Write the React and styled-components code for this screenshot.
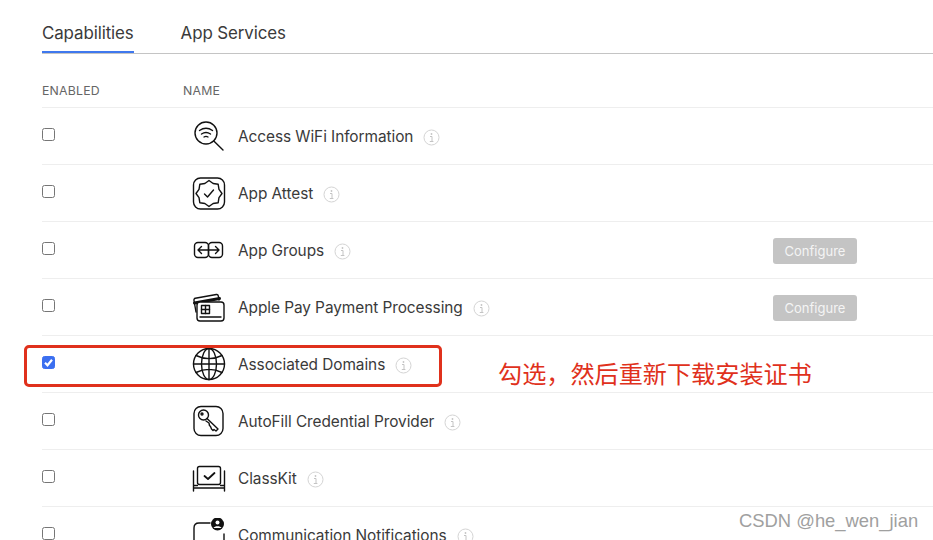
import React from "react";
import styled, { createGlobalStyle } from "styled-components";

const Global = createGlobalStyle`
  html, body { margin: 0; padding: 0; background: #fff; overflow: hidden; height: 540px; }
  body { font-family: Inter, "Liberation Sans", sans-serif; color: #333; }
`;
const Page = styled.div`
  position: relative; width: 933px; height: 540px; overflow: hidden;
  padding: 19px 0 0 42px; box-sizing: border-box;
`;
const Tabs = styled.div`
  display: flex; gap: 47px; height: 34px; border-bottom: 1px solid #c4c4c4;
`;
const Tab = styled.div`
  height: 34px; box-sizing: border-box; padding-top: 2px;
  font-size: 16.9px; line-height: 24px; color: #3a3a3a; letter-spacing: -0.1px;
  border-bottom: ${p => (p.$active ? "2px solid #3f78ee" : "none")};
`;
const Head = styled.div`
  display: grid; grid-template-columns: 141px 1fr; height: 54px; box-sizing: border-box;
  padding-top: 30px; border-bottom: 1px solid #eee;
  font-size: 12.3px; line-height: 14px; color: #666; letter-spacing: 0.2px;
`;
const Row = styled.div`
  display: grid; grid-template-columns: 141px 55px auto 1fr; align-items: center;
  height: 57px; box-sizing: border-box; border-bottom: 1px solid #eee;
`;
const Check = styled.span`
  width: 13px; height: 13px; box-sizing: border-box; border-radius: 2.5px; margin-top: -4px;
  border: 1px solid ${p => (p.$on ? "#3b6ff0" : "#767676")};
  background: ${p => (p.$on ? "#3b6ff0" : "#fff")};
  display: flex; align-items: center; justify-content: center;
`;
const IconBox = styled.span`
  display: flex; width: 34px; height: 34px; margin-left: 9px; margin-top: -1px;
  align-items: center; justify-content: center;
`;
const Name = styled.div`
  display: flex; align-items: center; gap: 10px; font-size: 15.4px; line-height: 20px; color: #3a3a3a;
  letter-spacing: -0.06px; margin-top: 1px;
`;
const InfoIcon = styled.svg`
  width: 17px; height: 17px; margin-top: 2px;
`;
const Configure = styled.div`
  justify-self: end; margin-right: 76px; margin-top: 2px; width: 84px; height: 26px; border-radius: 3px;
  background: #c4c4c4; color: #f4f4f4; font-size: 13px; line-height: 26px; text-align: center;
`;
const Highlight = styled.div`
  position: absolute; left: 24px; top: 345px; width: 418px; height: 42px; box-sizing: border-box;
  border: 3px solid #e0311c; border-radius: 5px;
`;
const Note = styled.div`
  position: absolute; left: 498px; top: 359px; font-size: 24.15px; line-height: 28px; white-space: nowrap;
  color: #e0311c; font-family: "Noto Sans CJK SC", sans-serif; font-weight: 400;
`;
const Watermark = styled.div`
  position: absolute; left: 739px; top: 511px; font-size: 18.4px; line-height: 20px; white-space: nowrap;
  color: #a0a0a0; font-family: "Liberation Sans", sans-serif;
`;

const Svg = ({ children }) => (
  <svg width="34" height="34" viewBox="0 0 34 34" fill="none" stroke="#111" strokeWidth="1.4" strokeLinecap="round" strokeLinejoin="round">
    {children}
  </svg>
);

const badge = (() => {
  const pts = [];
  for (let i = 0; i < 16; i++) {
    const r = i % 2 === 0 ? 13 : 10.8;
    const a = (i * Math.PI) / 8 - Math.PI / 2;
    pts.push(`${(17 + r * Math.cos(a)).toFixed(2)},${(17.5 + r * Math.sin(a)).toFixed(2)}`);
  }
  return pts.join(" ");
})();

const icons = {
  wifi: (
    <Svg>
      <circle cx="14" cy="14" r="11" />
      <path d="M21.8 22l9.2 9M7.5 11.5c4-2.7 9-2.7 13 0M9.5 15c2.8-1.8 6.200-1.800 9 0M12 18c1.300-.8 2.700-.8 4 0" />
    </Svg>
  ),
  attest: (
    <Svg>
      <rect x="1.500" y="2" width="31" height="31" rx="7" />
      <polygon points={badge} />
      <path d="M12.500 18l3 3 6-7" />
    </Svg>
  ),
  groups: (
    <Svg>
      <rect x="2.500" y="9.500" width="14" height="15" rx="3.500" />
      <rect x="16.500" y="9.500" width="14" height="15" rx="3.500" />
      <path d="M6 17h21M9.500 13.500L6 17l3.500 3.500M23.500 13.500L27 17l-3.500 3.500" />
    </Svg>
  ),
  pay: (
    <Svg>
      <path d="M4 22L2 10.500c-.3-1.200.3-2 1.300-2.200l21-3.800c1-.2 1.800.3 2 1.300l.8 4.200" />
      <path d="M2.500 13l25-4.500" strokeWidth="3" />
      <rect x="5" y="12" width="27" height="19" rx="3" fill="#fff" />
      <rect x="9.500" y="15.500" width="8" height="8" />
      <path d="M13.500 15.500v8M9.500 19.500h8M8 27h21" />
    </Svg>
  ),
  globe: (
    <Svg>
      <circle cx="17" cy="17" r="15.500" />
      <ellipse cx="17" cy="17" rx="7.500" ry="15.500" />
      <path d="M17 1.500v31M1.500 17h31M4 8.500c8 4 18 4 26 0M4 25.500c8-4 18-4 26 0" />
    </Svg>
  ),
  key: (
    <Svg>
      <rect x="2" y="2.500" width="29" height="29" rx="7" />
      <circle cx="11.500" cy="11" r="5" />
      <circle cx="10" cy="10" r="1" />
      <path d="M15 14.500l11 10.500-2 2-2-1.500-1 1-1.500-1.500-1-2.500-1-1-.5-2.500-3-2" />
    </Svg>
  ),
  classkit: (
    <Svg>
      <rect x="5.500" y="5.500" width="23" height="18" rx="2" />
      <path d="M12.500 15l3.500 3 6.500-6" strokeWidth="1.800" />
      <path d="M1.500 10v20M32.500 10v20M1.500 27h31M1.500 24.500h4M28.500 24.500h4" />
    </Svg>
  ),
  comm: (
    <Svg>
      <path d="M18 5H7c-3 0-5 2-5 5v24M32 16v18" />
      <circle cx="25.500" cy="6" r="6.500" fill="#111" stroke="none" />
      <circle cx="25.500" cy="4.500" r="2" fill="#fff" stroke="none" />
      <path d="M21.500 10c1-2.500 7-2.500 8 0z" fill="#fff" stroke="none" />
    </Svg>
  ),
};

const Info = () => (
  <InfoIcon viewBox="0 0 17 17" fill="none">
    <circle cx="8.500" cy="8.500" r="7.500" stroke="#d4d4d4" />
    <circle cx="8.500" cy="5" r="0.900" fill="#c4c4c4" />
    <path d="M7 7.500h2v5M6.800 12.500h3.600" stroke="#c4c4c4" />
  </InfoIcon>
);

const rows = [
  ["wifi", "Access WiFi Information"],
  ["attest", "App Attest"],
  ["groups", "App Groups", true],
  ["pay", "Apple Pay Payment Processing", true],
  ["globe", "Associated Domains", false, true],
  ["key", "AutoFill Credential Provider"],
  ["classkit", "ClassKit"],
  ["comm", "Communication Notifications"],
];

export default function App() {
  return (
    <Page>
      <Global />
      <Tabs>
        <Tab $active>Capabilities</Tab>
        <Tab>App Services</Tab>
      </Tabs>
      <Head>
        <span>ENABLED</span>
        <span>NAME</span>
      </Head>
      {rows.map(([icon, label, conf, on]) => (
        <Row key={label}>
          <Check $on={on}>
            {on && (
              <svg width="11" height="11" viewBox="0 0 11 11" fill="none" stroke="#fff" strokeWidth="2.200">
                <path d="M2 5.800l2.500 2.500L9 2.800" />
              </svg>
            )}
          </Check>
          <IconBox>{icons[icon]}</IconBox>
          <Name>
            {label}
            <Info />
          </Name>
          {conf ? <Configure>Configure</Configure> : <span />}
        </Row>
      ))}
      <Highlight />
      <Note>勾选，然后重新下载安装证书</Note>
      <Watermark>CSDN @he_wen_jian</Watermark>
    </Page>
  );
}
